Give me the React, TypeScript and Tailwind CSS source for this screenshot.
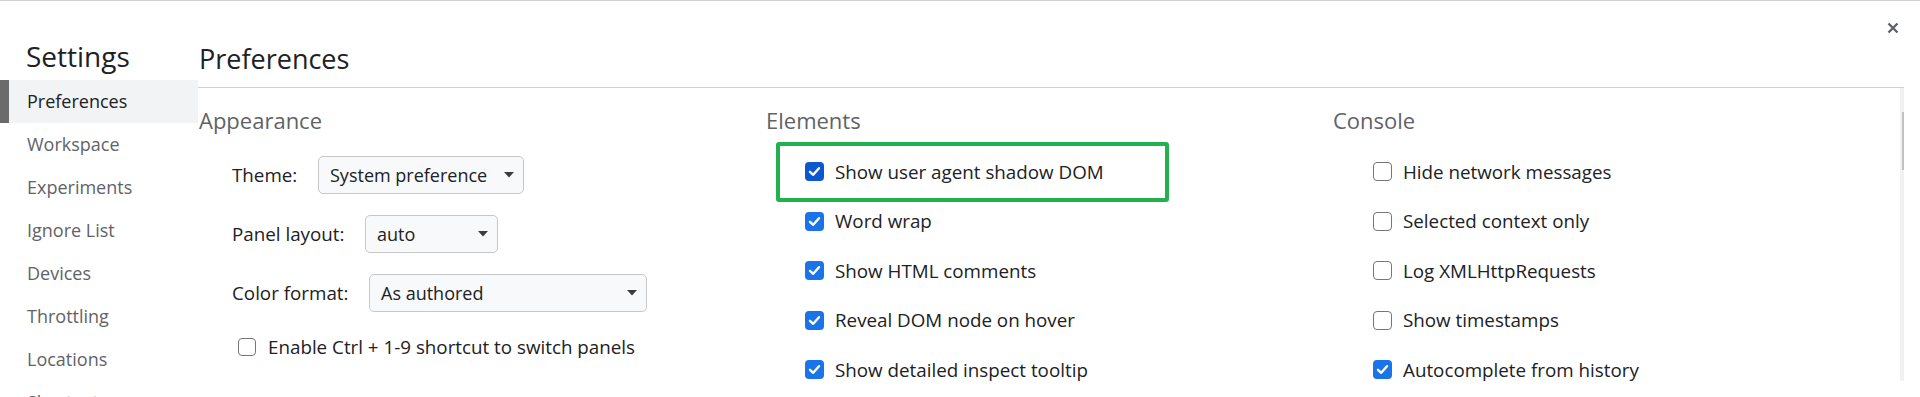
import React from "react";

const font = { fontFamily: '"Open Sans", "Noto Sans", Arial, sans-serif' };

function Check({ checked, dark, size = 19 }: { checked?: boolean; dark?: boolean; size?: number }) {
  if (checked) {
    return (
      <span
        className={`flex shrink-0 items-center justify-center rounded-[4px] ${dark ? "bg-[#0b57d0]" : "bg-[#1a73e8]"}`}
        style={{ width: size, height: size }}
      >
        <svg width="13" height="13" viewBox="0 0 13 13">
          <path d="M2 6.8 L5.2 9.8 L11 3.2" fill="none" stroke="#fff" strokeWidth="2.4" strokeLinecap="round" strokeLinejoin="round" />
        </svg>
      </span>
    );
  }
  return (
    <span
      className="block shrink-0 rounded-[4px] border-[1.5px] border-[#767676] bg-white"
      style={{ width: size, height: size }}
    />
  );
}

function Select({ value, width }: { value: string; width: number }) {
  return (
    <div
      className="flex h-[38px] items-center justify-between rounded-[5px] border border-[#c7c7c7] bg-[#f8f9fa] pl-[11px] pr-[9px] text-[18px] text-[#202124]"
      style={{ width }}
    >
      <span>{value}</span>
      <svg width="10" height="6" viewBox="0 0 10 6">
        <polygon points="0,0 10,0 5,5.5" fill="#3c3c3c" />
      </svg>
    </div>
  );
}

function CheckRow({ label, checked, dark }: { label: string; checked?: boolean; dark?: boolean }) {
  return (
    <div className="flex h-[22px] items-center pl-[39px]">
      <Check checked={checked} dark={dark} />
      <span className="ml-[11px] text-[18.8px] leading-[22px] text-[#202124]">{label}</span>
    </div>
  );
}

export default function App() {
  const items = ["Preferences", "Workspace", "Experiments", "Ignore List", "Devices", "Throttling", "Locations", "Shortcuts"];
  return (
    <div className="relative h-[397px] w-[1920px] overflow-hidden border-t border-[#cfd1d4] bg-white" style={font}>
      <div className="flex">
        {/* Sidebar */}
        <div className="w-[198px] shrink-0">
          <div className="h-[79px] pl-[26px] pt-[37px] text-[28px] leading-[36px] text-[#202124]">Settings</div>
          {items.map((it, i) => (
            <div
              key={it}
              className={`flex h-[43px] items-center text-[18px] ${i === 0 ? "bg-[#f1f3f4] text-[#202124]" : "text-[#5f6368]"}`}
            >
              <span className={`h-full w-[9px] ${i === 0 ? "bg-[#6b6b6b]" : ""}`} />
              <span className="pl-[18px]">{it}</span>
            </div>
          ))}
        </div>

        {/* Main */}
        <div className="w-[1706px] shrink-0">
          <div className="h-[87px] border-b border-[#d0d0d0] pl-px pt-[40px] text-[27px] leading-[36px] text-[#202124]">
            Preferences
          </div>
          <div className="flex h-[293px] overflow-hidden">
            <div className="grid flex-1 grid-cols-[567px_567px_567px] pl-px">
              {/* Appearance */}
              <div className="pt-[17px]">
                <div className="h-[30px] text-[22px] leading-[30px] text-[#5f6368]">Appearance</div>
                <div className="mt-[21px] flex flex-col gap-[21px] pl-[33px]">
                  <div className="flex h-[38px] items-center">
                    <span className="w-[86px] text-[18.8px] text-[#202124]">Theme:</span>
                    <Select value="System preference" width={206} />
                  </div>
                  <div className="flex h-[38px] items-center">
                    <span className="w-[133px] text-[18.8px] text-[#202124]">Panel layout:</span>
                    <Select value="auto" width={133} />
                  </div>
                  <div className="flex h-[38px] items-center">
                    <span className="w-[137px] text-[18.8px] text-[#202124]">Color format:</span>
                    <Select value="As authored" width={278} />
                  </div>
                </div>
                <div className="mt-[24px] flex h-[22px] items-center pl-[39px]">
                  <Check size={18} />
                  <span className="ml-[12px] text-[18.8px] leading-[22px] text-[#202124]">Enable Ctrl + 1-9 shortcut to switch panels</span>
                </div>
              </div>

              {/* Elements */}
              <div className="pt-[17px]">
                <div className="h-[30px] text-[22px] leading-[30px] text-[#5f6368]">Elements</div>
                <div className="mt-[25.5px] flex flex-col gap-[27.5px]">
                  <CheckRow label="Show user agent shadow DOM" checked dark />
                  <CheckRow label="Word wrap" checked />
                  <CheckRow label="Show HTML comments" checked />
                  <CheckRow label="Reveal DOM node on hover" checked />
                  <CheckRow label="Show detailed inspect tooltip" checked />
                </div>
              </div>

              {/* Console */}
              <div className="pt-[17px]">
                <div className="h-[30px] text-[22px] leading-[30px] text-[#5f6368]">Console</div>
                <div className="mt-[25.5px] flex flex-col gap-[27.5px] pl-px">
                  <CheckRow label="Hide network messages" />
                  <CheckRow label="Selected context only" />
                  <CheckRow label="Log XMLHttpRequests" />
                  <CheckRow label="Show timestamps" />
                  <CheckRow label="Autocomplete from history" checked />
                </div>
              </div>
            </div>

            {/* Scrollbar */}
            <div className="flex w-[25px] shrink-0 flex-col items-center bg-[#f1f1f1]">
              <svg className="mt-[11px]" width="11" height="6" viewBox="0 0 11 6">
                <polygon points="0,6 11,6 5.5,0" fill="#a3a3a3" />
              </svg>
              <div className="mt-[7px] h-[58px] w-[21px] bg-[#c1c1c1]" />
              <div className="flex-1" />
              <svg className="mb-[10px]" width="11" height="6" viewBox="0 0 11 6">
                <polygon points="0,0 11,0 5.5,6" fill="#505050" />
              </svg>
            </div>
          </div>
        </div>
      </div>

      {/* Close button */}
      <svg className="absolute left-[1887px] top-[21px]" width="12" height="12" viewBox="0 0 12 12">
        <path d="M1.5 1.5 L10.5 10.5 M10.5 1.5 L1.5 10.5" stroke="#5f6368" strokeWidth="2.4" />
      </svg>

      {/* Highlight annotation */}
      <div className="pointer-events-none absolute left-[776px] top-[141px] h-[60px] w-[393px] rounded-[3px] border-[4px] border-[#22b14c]" />
    </div>
  );
}
